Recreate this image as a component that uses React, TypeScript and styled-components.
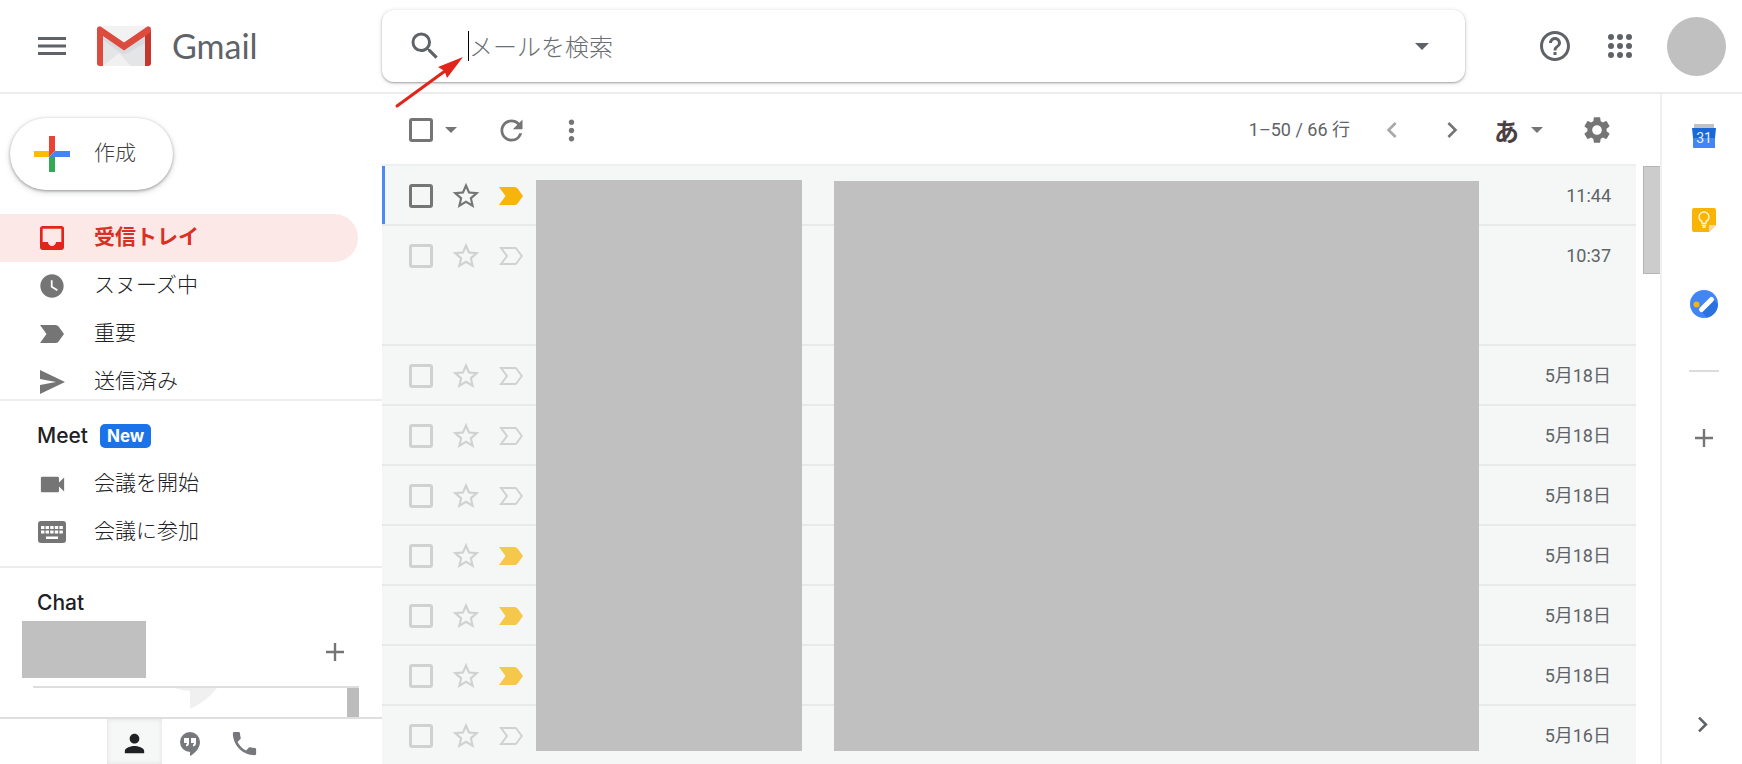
import React from "react";
import styled, { createGlobalStyle } from "styled-components";
import {
  MdSearch,
  MdHelpOutline,
  MdInbox,
  MdWatchLater,
  MdVideocam,
  MdRefresh,
  MdMoreVert,
  MdChevronLeft,
  MdChevronRight,
  MdSettings,
  MdStarBorder,
  MdPhone,
  MdPerson,
} from "react-icons/md";

const GlobalStyle = createGlobalStyle`
  *, *::before, *::after { box-sizing: border-box; }
  body {
    margin: 0;
    background: #fff;
    color: #202124;
    font-family: Roboto, "Noto Sans CJK JP", sans-serif;
    font-size: 18px;
  }
  button { font: inherit; color: inherit; border: 0; padding: 0; background: none; cursor: pointer; }
  svg { display: block; flex: none; }
`;

const Shell = styled.div`
  position: relative;
  display: flex;
  flex-direction: column;
  height: 100vh;
  overflow: hidden;
`;

/* ---------- header ---------- */

const Header = styled.header`
  flex: none;
  display: grid;
  grid-template-columns: 382px minmax(0, 1fr) 277px;
  height: 94px;
  border-bottom: 2px solid #ececed;
`;

const Brand = styled.div`
  display: flex;
  align-items: center;
  padding-left: 38px;
`;

const IconButton = styled.button<{ $w?: number; $color?: string }>`
  display: flex;
  flex: none;
  align-items: center;
  justify-content: center;
  width: ${(p) => p.$w ?? 36}px;
  height: 36px;
  color: ${(p) => p.$color ?? "#757575"};
`;

const Logo = styled.a`
  display: flex;
  align-items: center;
  gap: 21px;
  margin-left: 31px;
  color: #5f6368;
  font-family: Lato, sans-serif;
  font-size: 34px;
  line-height: 40px;
  text-decoration: none;
`;

const SearchForm = styled.form`
  display: flex;
  align-items: center;
  align-self: start;
  height: 72px;
  margin-top: 10px;
  padding: 0 25px;
  border-radius: 12px;
  background: #fff;
  box-shadow: 0 1px 2px rgba(60, 64, 67, 0.4), 0 1px 5px rgba(60, 64, 67, 0.18);
`;

const Caret = styled.span`
  flex: none;
  width: 1px;
  height: 30px;
  margin-left: 25px;
  background: #000;
`;

const SearchInput = styled.input`
  flex: 1;
  min-width: 0;
  height: 40px;
  padding: 0 0 2px;
  border: 0;
  outline: 0;
  background: none;
  color: #202124;
  font-family: "Noto Sans CJK JP", sans-serif;
  font-size: 24px;
  font-weight: 300;
  &::placeholder { color: #6b6f73; opacity: 1; }
`;

const Account = styled.div`
  display: flex;
  align-items: center;
  justify-content: flex-end;
  gap: 29px;
  padding-right: 16px;
`;

const Avatar = styled.button`
  width: 59px;
  height: 59px;
  border-radius: 50%;
  background: #c0c0c0;
`;

/* ---------- body ---------- */

const Body = styled.div`
  flex: 1;
  min-height: 0;
  display: grid;
  grid-template-columns: 382px minmax(0, 1fr) 82px;
`;

const Sidebar = styled.aside`
  display: flex;
  flex-direction: column;
  min-height: 0;
`;

const Mailboxes = styled.div`
  flex: 1;
  min-height: 0;
  overflow: hidden;
  padding-top: 24px;
`;

const Compose = styled.button`
  display: flex;
  align-items: center;
  gap: 24px;
  width: 163px;
  height: 72px;
  margin: 0 0 24px 10px;
  padding-left: 24px;
  border-radius: 36px;
  background: #fff;
  color: #3c4043;
  font-size: 21px;
  font-weight: 300;
  line-height: 32px;
  box-shadow: 0 1px 3px rgba(60, 64, 67, 0.45), 0 2px 6px rgba(60, 64, 67, 0.2);
`;

const Label = styled.span`
  padding-bottom: 2px;
`;

const NavLink = styled.a<{ $active?: boolean }>`
  display: grid;
  grid-template-columns: 28px 1fr;
  column-gap: 28px;
  align-items: center;
  justify-items: start;
  height: 48px;
  margin-right: 24px;
  padding-left: 38px;
  border-radius: 0 24px 24px 0;
  background: ${(p) => (p.$active ? "#fce8e6" : "transparent")};
  color: ${(p) => (p.$active ? "#d93025" : "#202124")};
  font-size: 21px;
  font-weight: ${(p) => (p.$active ? 700 : 300)};
  line-height: 32px;
  text-decoration: none;
  svg {
    justify-self: center;
    color: ${(p) => (p.$active ? "#e2251b" : "#757575")};
  }
`;

const Section = styled.section<{ $h: number }>`
  flex: none;
  display: flex;
  flex-direction: column;
  height: ${(p) => p.$h}px;
  border-top: 2px solid #ededee;
`;

const SectionTitle = styled.h2`
  display: flex;
  align-items: center;
  gap: 12px;
  margin: 0;
  padding: 23px 0 0 37px;
  font-family: Inter, sans-serif;
  font-size: 21px;
  font-weight: 500;
  line-height: 24px;
`;

const Badge = styled.span`
  padding: 0 7px;
  border-radius: 5px;
  background: #1a73e8;
  color: #fff;
  font-size: 17px;
  font-weight: 700;
  line-height: 24px;
`;

const MeetLinks = styled.div`
  padding-top: 12px;
`;

const ChatUser = styled.div`
  display: flex;
  align-items: center;
  justify-content: space-between;
  margin: 6px 29px 0 22px;
  button { margin-top: 4px; }
`;

const NameMask = styled.div`
  width: 124px;
  height: 57px;
  background: #c0c0c0;
`;

const ChatPane = styled.div`
  display: flex;
  flex: 1;
  justify-content: space-between;
  margin: 8px 23px 0 33px;
  border-top: 2px solid #dedede;
  padding-left: 142px;
`;

const ChatThumb = styled.div`
  width: 12px;
  background: #bcbcbc;
`;

const ChatTabs = styled.div`
  flex: none;
  display: flex;
  height: 47px;
  padding-left: 107px;
  border-top: 2px solid #dfdfe0;
`;

const ChatTab = styled.button<{ $active?: boolean }>`
  display: flex;
  align-items: center;
  justify-content: center;
  width: 55px;
  height: 100%;
  padding-top: 4px;
  color: ${(p) => (p.$active ? "#202124" : "#77787b")};
  background: ${(p) => (p.$active ? "#f6f8f7" : "transparent")};
  box-shadow: ${(p) => (p.$active ? "inset 0 0 5px #dedede" : "none")};
`;

/* ---------- mail list ---------- */

const Main = styled.main`
  display: flex;
  flex-direction: column;
  min-width: 0;
  min-height: 0;
`;

const Toolbar = styled.div`
  flex: none;
  display: flex;
  align-items: center;
  justify-content: space-between;
  height: 72px;
  margin-right: 24px;
  padding: 2px 21px 0 27px;
  border-bottom: 2px solid #eeefef;
`;

const ToolGroup = styled.div`
  display: flex;
  align-items: center;
  gap: 24px;
  color: #5f6368;
`;

const Pair = styled.div`
  display: flex;
  align-items: center;
`;

const PageCount = styled.span`
  line-height: 24px;
  white-space: nowrap;
`;

const Kana = styled.span`
  color: #4a4043;
  font-family: "Noto Sans CJK JP", sans-serif;
  font-size: 25px;
  font-weight: 700;
  line-height: 32px;
`;

const Check = styled.input<{ $dim?: boolean }>`
  appearance: none;
  display: block;
  width: 24px;
  height: 24px;
  margin: 0;
  border: 3px solid ${(p) => (p.$dim ? "#d0d2d1" : "#757575")};
  border-radius: 3px;
`;

const ListArea = styled.div`
  flex: 1;
  min-height: 0;
  overflow: hidden;
  display: flex;
  align-items: flex-start;
  gap: 7px;
`;

const ListBox = styled.div`
  position: relative;
  flex: 1;
  min-width: 0;
  background: #f4f7f6;
`;

const MailTable = styled.table`
  width: 100%;
  border-spacing: 0;
  table-layout: fixed;
`;

const MailRow = styled.tr<{ $tall?: boolean; $selected?: boolean }>`
  height: ${(p) => (p.$tall ? 120 : 60)}px;
  td {
    padding: 0;
    border-bottom: 2px solid #e8eaea;
    vertical-align: top;
  }
  td:first-child {
    box-shadow: ${(p) => (p.$selected ? "inset 3px 0 #4a8af4" : "none")};
  }
`;

const Tools = styled.div`
  display: flex;
  align-items: center;
  height: 58px;
  padding: 2px 0 0 27px;
`;

const RowButton = styled.button`
  display: flex;
  align-items: center;
  justify-content: center;
  height: 32px;
  margin-left: 17px;
`;

const DateCell = styled.td`
  color: #5f6368;
  text-align: right;
  line-height: 60px;
  && { padding-right: 25px; }
  time { display: block; height: 58px; }
`;

const Mask = styled.div<{ $wide?: boolean }>`
  position: absolute;
  top: ${(p) => (p.$wide ? 15 : 14)}px;
  bottom: 15px;
  left: ${(p) => (p.$wide ? 452 : 154)}px;
  ${(p) => (p.$wide ? "right: 157px;" : "width: 266px;")}
  background: #c0c0c0;
`;

const ScrollThumb = styled.div`
  flex: none;
  width: 17px;
  height: 108px;
  background: #cbcccb;
  border: 1px solid #b4b4b4;
  border-right: 0;
`;

/* ---------- side panel ---------- */

const AddOns = styled.nav`
  display: flex;
  flex-direction: column;
  align-items: center;
  border-left: 2px solid #f0f0f1;
  padding: 24px 0 22px 4px;
`;

const AddOnList = styled.div`
  display: flex;
  flex-direction: column;
  gap: 48px;
`;

const Divider = styled.hr`
  width: 30px;
  height: 2px;
  margin: 48px 0;
  border: 0;
  background: #dcdcdc;
`;

const PanelToggle = styled.div`
  margin: auto 4px 0 0;
`;

const Pointer = styled.svg`
  position: absolute;
  left: 394px;
  top: 54px;
  pointer-events: none;
`;

/* ---------- drawings ---------- */

const MenuIcon = () => (
  <svg width="28" height="20" viewBox="0 0 28 20" fill="#5f6368">
    <path d="M0 1h28v3H0zM0 8.500h28v3H0zM0 16h28v3H0z" />
  </svg>
);

const GmailIcon = () => (
  <svg width="54" height="40" viewBox="0 0 54 40">
    <rect width="54" height="40" rx="3" fill="#e4e5e7" />
    <path d="M4 0h46L27 17z" fill="#f2f2f2" />
    <path d="M6 40L22 27l12 13z" fill="#f1f1f2" />
    <path d="M6 9l21 15L48 9v8L29 28h-4L6 14z" fill="#d3d5d8" opacity=".7" />
    <path d="M48 7l6-3v33q0 3-3 3h-3z" fill="#c5372c" />
    <path d="M3 40q-3 0-3-3V3.500Q0 0 3.500.6L27 16.500 50.500.6Q54 0 54 4q0 2-2 3.500L27 24.500 6 10v30z" fill="#dd4b3e" />
  </svg>
);

const DropIcon = ({ w = 12 }: { w?: number }) => (
  <svg width={w} height={w / 2} viewBox="0 0 10 5" fill="currentColor">
    <path d="M0 0h10L5 5z" />
  </svg>
);

const AppsIcon = () => (
  <svg width="24" height="24" viewBox="0 0 24 24" fill="currentColor">
    {[3, 12, 21].map((y) => [3, 12, 21].map((x) => <circle key={`${x}-${y}`} cx={x} cy={y} r="3" />))}
  </svg>
);

const ComposeIcon = () => (
  <svg width="36" height="36" viewBox="0 0 36 36">
    <path d="M15 0h6v15l-6 6z" fill="#ea4335" />
    <path d="M0 15h15v6H0z" fill="#fbbc05" />
    <path d="M15 21h6v15h-6z" fill="#34a853" />
    <path d="M21 15h15v6H15z" fill="#4285f4" />
  </svg>
);

const MarkerIcon = ({ fill = "currentColor" }: { fill?: string }) => (
  <svg width="24" height="18" viewBox="0 0 24 18">
    <path d="M0 0h15.500Q17.500 0 18.600 1.500L24 9l-5.400 7.500Q17.500 18 15.500 18H0l6.500-9z" fill={fill} />
  </svg>
);

const MarkerOutlineIcon = () => (
  <svg width="24" height="18" viewBox="0 0 24 18">
    <path d="M2 1h14q1 0 1.500.8L22.800 9l-5.300 7.200Q17 17 16 17H2l6-8z" fill="none" stroke="#d0d2d1" strokeWidth="2" />
  </svg>
);

const SendIcon = () => (
  <svg width="25" height="24" viewBox="0 0 25 24" fill="currentColor">
    <path d="M0 0l25 12L0 24v-9l16-3L0 9z" />
  </svg>
);

const KeyboardIcon = () => (
  <svg width="28" height="22" viewBox="0 0 28 22">
    <rect width="28" height="22" rx="3" fill="#757575" />
    {[5, 9.5].map((y) => [3, 7.6, 12.2, 16.8, 21.4].map((x) => <rect key={`${x}-${y}`} x={x} y={y} width="3.400" height="3" fill="#fff" />))}
    <rect x="8" y="15.500" width="12" height="2.500" fill="#fff" />
  </svg>
);

const PlusIcon = () => (
  <svg width="18" height="18" viewBox="0 0 18 18" fill="#757575">
    <path d="M7.800 0h2.400v7.800H18v2.400h-7.800V18H7.800v-7.800H0V7.800h7.800z" />
  </svg>
);

const BubbleTail = () => (
  <svg width="42" height="21" viewBox="0 0 42 21">
    <path d="M0 0h42Q32 13 15 21V3Q8 3 0 0z" fill="#f0f0f0" />
  </svg>
);

const HangoutsIcon = () => (
  <svg width="20" height="24" viewBox="0 0 20 24">
    <path d="M10 0a10 10 0 0 0 0 20v4c5-2.500 10-8 10-14A10 10 0 0 0 10 0z" fill="#77787b" />
    <path d="M4 6h5v5q0 3-3 3.500v-2q1-.3 1-1.500H4zM11 6h5v5q0 3-3 3.500v-2q1-.3 1-1.500h-3z" fill="#fff" />
  </svg>
);

const CalendarIcon = () => (
  <svg width="24" height="24" viewBox="0 0 24 24">
    <path d="M2 0h20v5H2z" fill="#bfc3c7" />
    <path d="M0 4h24l-1 10H1z" fill="#1a67d8" />
    <path d="M1 14h22v10H2q-1 0-1-1z" fill="#4285f4" />
    <text x="12" y="19" textAnchor="middle" fill="#e8f0fe" fontSize="14" fontFamily="Roboto, sans-serif">31</text>
  </svg>
);

const KeepIcon = () => (
  <svg width="24" height="24" viewBox="0 0 24 24">
    <path d="M2 0h20q2 0 2 2v15l-7 7H2q-2 0-2-2V2q0-2 2-2z" fill="#f9b406" />
    <path d="M17 17h7l-7 7z" fill="#fbd9a4" />
    <path d="M10 15.500v-2q-3-1.500-3-4.500a5 5 0 0 1 10 0q0 3-3 4.500v2z" fill="none" stroke="#fff3d6" strokeWidth="1.400" />
    <path d="M10 17.500h4M10.500 19.300h3" stroke="#fff3d6" strokeWidth="1.400" />
  </svg>
);

const TasksIcon = () => (
  <svg width="28" height="28" viewBox="0 0 28 28">
    <circle cx="14" cy="14" r="14" fill="#4285f4" />
    <path d="M11.500 21.500L23 9l5 5A14 14 0 0 1 17 27.700z" fill="#2a72e0" />
    <path d="M11.500 19.500l10-10" stroke="#fff" strokeWidth="5" strokeLinecap="round" />
    <circle cx="6.500" cy="14.500" r="3" fill="#f9b406" />
  </svg>
);

/* ---------- data ---------- */

type Mail = { date: string; bright?: boolean; tall?: boolean; marker?: string };

const mails: Mail[] = [
  { date: "11:44", bright: true, marker: "#f7b50c" },
  { date: "10:37", tall: true },
  { date: "5月18日" },
  { date: "5月18日" },
  { date: "5月18日" },
  { date: "5月18日", marker: "#f5c84c" },
  { date: "5月18日", marker: "#f5c84c" },
  { date: "5月18日", marker: "#f5c84c" },
  { date: "5月16日" },
];

const folders = [
  { label: "受信トレイ", icon: <MdInbox size={32} />, active: true },
  { label: "スヌーズ中", icon: <MdWatchLater size={28} /> },
  { label: "重要", icon: <MarkerIcon /> },
  { label: "送信済み", icon: <SendIcon /> },
];

export default function App() {
  return (
    <Shell>
      <GlobalStyle />
      <Header>
        <Brand>
          <IconButton $w={28} aria-label="メインメニュー"><MenuIcon /></IconButton>
          <Logo href="#inbox"><GmailIcon />Gmail</Logo>
        </Brand>
        <SearchForm role="search">
          <IconButton type="button" $color="#5f6368" aria-label="検索"><MdSearch size={36} /></IconButton>
          <Caret />
          <SearchInput type="text" placeholder="メールを検索" aria-label="メールを検索" />
          <IconButton type="button" $color="#5f6368" aria-label="検索オプション"><DropIcon w={14} /></IconButton>
        </SearchForm>
        <Account>
          <IconButton $color="#5f6368" aria-label="サポート"><MdHelpOutline size={36} /></IconButton>
          <IconButton $color="#5f6368" aria-label="アプリ"><AppsIcon /></IconButton>
          <Avatar aria-label="アカウント" />
        </Account>
      </Header>

      <Body>
        <Sidebar>
          <Mailboxes>
            <Compose><ComposeIcon /><Label>作成</Label></Compose>
            <nav>
              {folders.map((f) => (
                <NavLink key={f.label} href="#" $active={f.active}>{f.icon}<Label>{f.label}</Label></NavLink>
              ))}
            </nav>
          </Mailboxes>
          <Section $h={167}>
            <SectionTitle>Meet<Badge>New</Badge></SectionTitle>
            <MeetLinks>
              <NavLink href="#"><MdVideocam size={31} /><Label>会議を開始</Label></NavLink>
              <NavLink href="#"><KeyboardIcon /><Label>会議に参加</Label></NavLink>
            </MeetLinks>
          </Section>
          <Section $h={151}>
            <SectionTitle>Chat</SectionTitle>
            <ChatUser>
              <NameMask />
              <IconButton aria-label="新しいチャット"><PlusIcon /></IconButton>
            </ChatUser>
            <ChatPane><BubbleTail /><ChatThumb /></ChatPane>
          </Section>
          <ChatTabs>
            <ChatTab $active aria-label="連絡先"><MdPerson size={29} /></ChatTab>
            <ChatTab aria-label="ハングアウト"><HangoutsIcon /></ChatTab>
            <ChatTab aria-label="電話"><MdPhone size={31} /></ChatTab>
          </ChatTabs>
        </Sidebar>

        <Main>
          <Toolbar>
            <ToolGroup>
              <Pair>
                <Check type="checkbox" aria-label="すべて選択" />
                <IconButton aria-label="選択"><DropIcon /></IconButton>
              </Pair>
              <IconButton aria-label="更新"><MdRefresh size={33} /></IconButton>
              <IconButton aria-label="その他"><MdMoreVert size={33} /></IconButton>
            </ToolGroup>
            <ToolGroup>
              <PageCount>1–50 / 66 行</PageCount>
              <IconButton $color="#a8a8a8" aria-label="前へ"><MdChevronLeft size={32} /></IconButton>
              <IconButton aria-label="次へ"><MdChevronRight size={32} /></IconButton>
              <Pair>
                <Kana>あ</Kana>
                <IconButton aria-label="入力ツール"><DropIcon /></IconButton>
              </Pair>
              <IconButton aria-label="設定"><MdSettings size={32} /></IconButton>
            </ToolGroup>
          </Toolbar>
          <ListArea>
            <ListBox>
              <MailTable>
                <tbody>
                  {mails.map((m, i) => (
                    <MailRow key={i} $tall={m.tall} $selected={i === 0}>
                      <td>
                        <Tools>
                          <Check type="checkbox" $dim={!m.bright} aria-label={`メール ${i + 1}`} />
                          <RowButton aria-label="スター">
                            <MdStarBorder size={32} color={m.bright ? "#757575" : "#d0d2d1"} />
                          </RowButton>
                          <RowButton aria-label="重要マーク">
                            {m.marker ? <MarkerIcon fill={m.marker} /> : <MarkerOutlineIcon />}
                          </RowButton>
                        </Tools>
                      </td>
                      <DateCell><time>{m.date}</time></DateCell>
                    </MailRow>
                  ))}
                </tbody>
              </MailTable>
              <Mask />
              <Mask $wide />
            </ListBox>
            <ScrollThumb />
          </ListArea>
        </Main>

        <AddOns>
          <AddOnList>
            <IconButton aria-label="カレンダー"><CalendarIcon /></IconButton>
            <IconButton aria-label="Keep"><KeepIcon /></IconButton>
            <IconButton aria-label="ToDo リスト"><TasksIcon /></IconButton>
          </AddOnList>
          <Divider />
          <IconButton aria-label="アドオンを取得"><PlusIcon /></IconButton>
          <PanelToggle>
            <IconButton $color="#5f6368" aria-label="サイドパネルを非表示"><MdChevronRight size={31} /></IconButton>
          </PanelToggle>
        </AddOns>
      </Body>

      <Pointer width="72" height="56" viewBox="0 0 72 56">
        <path d="M3 52L51 17" stroke="#e0261b" strokeWidth="3" strokeLinecap="round" />
        <path d="M69 3L44 13l6.500 4 2.500 7z" fill="#e0261b" />
      </Pointer>
    </Shell>
  );
}
